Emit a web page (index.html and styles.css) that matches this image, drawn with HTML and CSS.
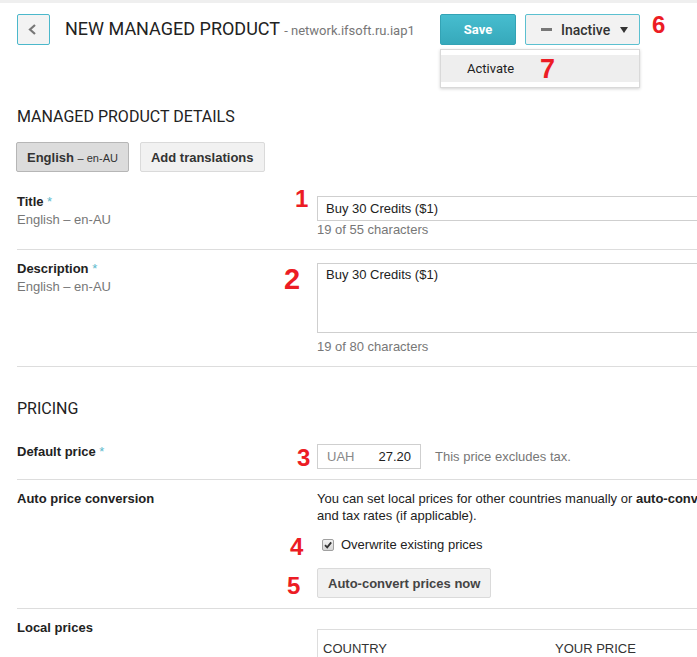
FILE: index.html
```html
<!DOCTYPE html>
<html lang="en">
<head>
<meta charset="utf-8">
<title>New managed product</title>
<link rel="stylesheet" href="styles.css">
</head>
<body>
<div class="topband"></div>
<header class="header">
  <button class="back" type="button" aria-label="Back">
    <svg width="9" height="11" viewBox="0 0 9 11"><polyline points="7,1 2,5.5 7,10" fill="none" stroke="#777" stroke-width="2.2"/></svg>
  </button>
  <h1 class="page-title">NEW MANAGED PRODUCT <span class="pkg">- network.ifsoft.ru.iap1</span></h1>
  <div class="actions">
    <button class="btn-save" type="button">Save</button>
    <button class="btn-status" type="button"><span class="dash"></span><span class="status-text">Inactive</span><span class="caret"></span></button>
    <span class="mark mark-6">6</span>
    <div class="menu">
      <div class="menu-item">Activate <span class="mark mark-7">7</span></div>
    </div>
  </div>
</header>

<main class="content">
  <h2 class="section-title first">MANAGED PRODUCT DETAILS</h2>
  <div class="lang-row">
    <button class="lang-btn active" type="button">English <span class="lang-code">– en-AU</span></button>
    <button class="lang-btn" type="button">Add translations</button>
  </div>

  <div class="row">
    <div class="label">Title <span class="req">*</span><span class="sub">English – en-AU</span></div>
    <div class="field">
      <span class="mark mark-1">1</span>
      <input class="text-input" type="text" value="Buy 30 Credits ($1)">
      <div class="hint">19 of 55 characters</div>
    </div>
  </div>

  <div class="row">
    <div class="label">Description <span class="req">*</span><span class="sub">English – en-AU</span></div>
    <div class="field">
      <span class="mark mark-2">2</span>
      <textarea class="text-area">Buy 30 Credits ($1)</textarea>
      <div class="hint hint-gap">19 of 80 characters</div>
    </div>
  </div>

  <h2 class="section-title pricing">PRICING</h2>

  <div class="row">
    <div class="label">Default price <span class="req">*</span></div>
    <div class="field price-field">
      <span class="mark mark-3">3</span>
      <div class="price-box"><span class="currency">UAH</span><span class="amount">27.20</span></div>
      <span class="price-note">This price excludes tax.</span>
    </div>
  </div>

  <div class="row">
    <div class="label">Auto price conversion</div>
    <div class="field">
      <span class="mark mark-4">4</span>
      <span class="mark mark-5">5</span>
      <p class="desc">You can set local prices for other countries manually or <b>auto-convert</b> them using today's exchange rates<br>and tax rates (if applicable).</p>
      <label class="check-line"><span class="checkbox"><svg width="10" height="10" viewBox="0 0 10 10"><polyline points="2,5.2 4.2,7.4 8.2,2.4" fill="none" stroke="#333" stroke-width="1.8"/></svg></span>Overwrite existing prices</label>
      <button class="btn-plain" type="button">Auto-convert prices now</button>
    </div>
  </div>

  <div class="row">
    <div class="label">Local prices</div>
    <div class="field">
      <table class="prices">
        <thead><tr><th class="col-country">COUNTRY</th><th>YOUR PRICE</th></tr></thead>
      </table>
    </div>
  </div>
</main>
</body>
</html>
```
FILE: styles.css
```css
html, body {
  overflow: hidden;
}
body {
  margin: 0;
  background: #fff;
  font-family: "Liberation Sans", Arial, sans-serif;
  font-size: 13px;
  color: #222;
}
button {
  font-family: inherit;
  cursor: pointer;
}

.topband {
  height: 3px;
  background: #efefef;
}

/* header */
.header {
  display: flex;
  align-items: flex-start;
  padding: 11px 0 0 17px;
  height: 30px;
}
.back {
  box-sizing: border-box;
  width: 33px;
  height: 31px;
  padding: 0 3px 0 0;
  border: 1px solid #4bb8cb;
  border-radius: 2px;
  background: #f3f3f3;
  display: flex;
  align-items: center;
  justify-content: center;
}
.back svg { display: block; }
.page-title {
  flex: 0 0 375px;
  margin: 0 0 0 15px;
  font-family: Roboto, sans-serif;
  font-weight: 400;
  font-size: 18px;
  line-height: 30px;
  color: #222;
  white-space: nowrap;
}
.pkg {
  font-size: 13px;
  color: #777;
}
.actions {
  position: relative;
  display: flex;
  align-items: flex-start;
}
.btn-save {
  box-sizing: border-box;
  width: 76px;
  height: 31px;
  border: 1px solid #33a3b5;
  border-radius: 2px;
  background: linear-gradient(#47bdcf, #36a9bb);
  color: #fff;
  font-family: Roboto, sans-serif;
  font-weight: 700;
  font-size: 13px;
}
.btn-status {
  box-sizing: border-box;
  margin-left: 9px;
  width: 115px;
  height: 31px;
  padding: 0 0 0 15px;
  border: 1px solid #5bc0d0;
  border-radius: 2px;
  background: #f2f2f2;
  display: flex;
  align-items: center;
  font-family: Roboto, sans-serif;
  font-weight: 500;
  font-size: 14px;
  color: #333;
}
.dash {
  width: 11px;
  height: 3px;
  background: #777;
  margin-right: 9px;
}
.caret {
  margin-left: 10px;
  width: 0;
  height: 0;
  border-left: 4px solid transparent;
  border-right: 4px solid transparent;
  border-top: 6px solid #333;
}
.menu {
  position: absolute;
  left: 0;
  top: 35px;
  box-sizing: border-box;
  width: 200px;
  padding: 5px 0;
  background: #fff;
  border: 1px solid #d9d9d9;
  box-shadow: 0 1px 3px rgba(0, 0, 0, 0.18);
}
.menu-item {
  position: relative;
  height: 27px;
  line-height: 27px;
  padding-left: 26px;
  background: #eee;
  font-family: Roboto, sans-serif;
  font-size: 13px;
  color: #222;
}

/* annotation marks */
.mark {
  position: absolute;
  font-family: "Liberation Sans", Arial, sans-serif;
  font-weight: 700;
  font-size: 24px;
  line-height: 24px;
  color: #ec1c24;
}
.mark-6 {
  position: static;
  margin: -1px 0 0 12px;
}
.mark-7 {
  left: 99px;
  top: 1px;
  font-size: 27px;
  line-height: 27px;
}
.mark-1 { left: -22px; top: -6px; }
.mark-2 { left: -33px; top: 5px; font-size: 29px; line-height: 29px; }
.mark-3 { left: -20px; top: 2px; }
.mark-4 { left: -27px; top: 45px; }
.mark-5 { left: -30px; top: 84px; }

/* content */
.content {
  padding-left: 17px;
  width: 1100px;
}
.section-title {
  margin: 0;
  font-family: Roboto, sans-serif;
  font-weight: 400;
  font-size: 16px;
  line-height: 20px;
  color: #222;
}
.section-title.first { margin-top: 63px; }
.section-title.pricing { margin: 32px 0 14px; }

.lang-row {
  display: flex;
  gap: 11px;
  margin: 15px 0 11px -1px;
}
.lang-btn {
  box-sizing: border-box;
  height: 30px;
  padding: 0 10px;
  border: 1px solid #dadada;
  border-radius: 2px;
  background: #f1f1f1;
  font-weight: 700;
  font-size: 13px;
  color: #333;
}
.lang-btn.active {
  background: #dcdcdc;
  border-color: #b6b6b6;
}
.lang-code {
  font-weight: 400;
  font-size: 11px;
}

.row {
  display: grid;
  grid-template-columns: 300px 1fr;
  padding: 10px 0;
  border-bottom: 1px solid #ddd;
}
.label {
  font-weight: 700;
  line-height: 18px;
  color: #222;
}
.req {
  font-weight: 400;
  color: #5bb9cc;
}
.sub {
  display: block;
  font-weight: 400;
  color: #777;
}
.field {
  position: relative;
  line-height: 18px;
}
.text-input {
  display: block;
  box-sizing: border-box;
  margin: 3px 0 0;
  width: 600px;
  height: 25px;
  padding: 0 8px;
  border: 1px solid #cfcfcf;
  border-radius: 0;
  font-family: inherit;
  font-size: 13px;
  color: #222;
  background: #fff;
}
.text-area {
  display: block;
  box-sizing: border-box;
  margin: 3px 0 0;
  width: 600px;
  height: 70px;
  padding: 2px 8px;
  border: 1px solid #cfcfcf;
  border-radius: 0;
  resize: none;
  font-family: inherit;
  font-size: 13px;
  line-height: 18px;
  color: #222;
}
.hint { color: #777; }
.hint-gap { margin-top: 5px; }

.price-field {
  display: flex;
  align-items: center;
  align-self: start;
  margin-top: 1px;
}
.price-box {
  box-sizing: border-box;
  display: flex;
  justify-content: space-between;
  align-items: center;
  width: 104px;
  height: 25px;
  padding: 0 9px;
  border: 1px solid #cfcfcf;
}
.currency { color: #888; }
.amount { color: #222; }
.price-note {
  margin-left: 14px;
  color: #777;
}

.desc {
  margin: 0;
  line-height: 17px;
  white-space: nowrap;
}
.check-line {
  display: flex;
  align-items: center;
  height: 18px;
  margin-top: 12px;
}
.checkbox {
  box-sizing: border-box;
  display: flex;
  align-items: center;
  justify-content: center;
  width: 12px;
  height: 12px;
  margin: 0 7px 0 5px;
  border: 1px solid #a0a0a0;
  border-radius: 2px;
  background: linear-gradient(#f2f2f2, #d6d6d6);
}
.checkbox svg { display: block; }
.btn-plain {
  display: block;
  box-sizing: border-box;
  margin-top: 14px;
  height: 30px;
  padding: 0 10px;
  border: 1px solid #dadada;
  border-radius: 2px;
  background: #f1f1f1;
  font-weight: 700;
  font-size: 13px;
  color: #444;
}

.prices {
  margin-top: 10px;
  width: 600px;
  border-collapse: collapse;
  border-top: 1px solid #ddd;
  border-left: 1px solid #ddd;
}
.prices th {
  padding: 10px 5px 0;
  text-align: left;
  font-weight: 400;
  font-size: 13px;
  line-height: 18px;
  color: #333;
}
.prices .col-country { width: 222px; }
```
